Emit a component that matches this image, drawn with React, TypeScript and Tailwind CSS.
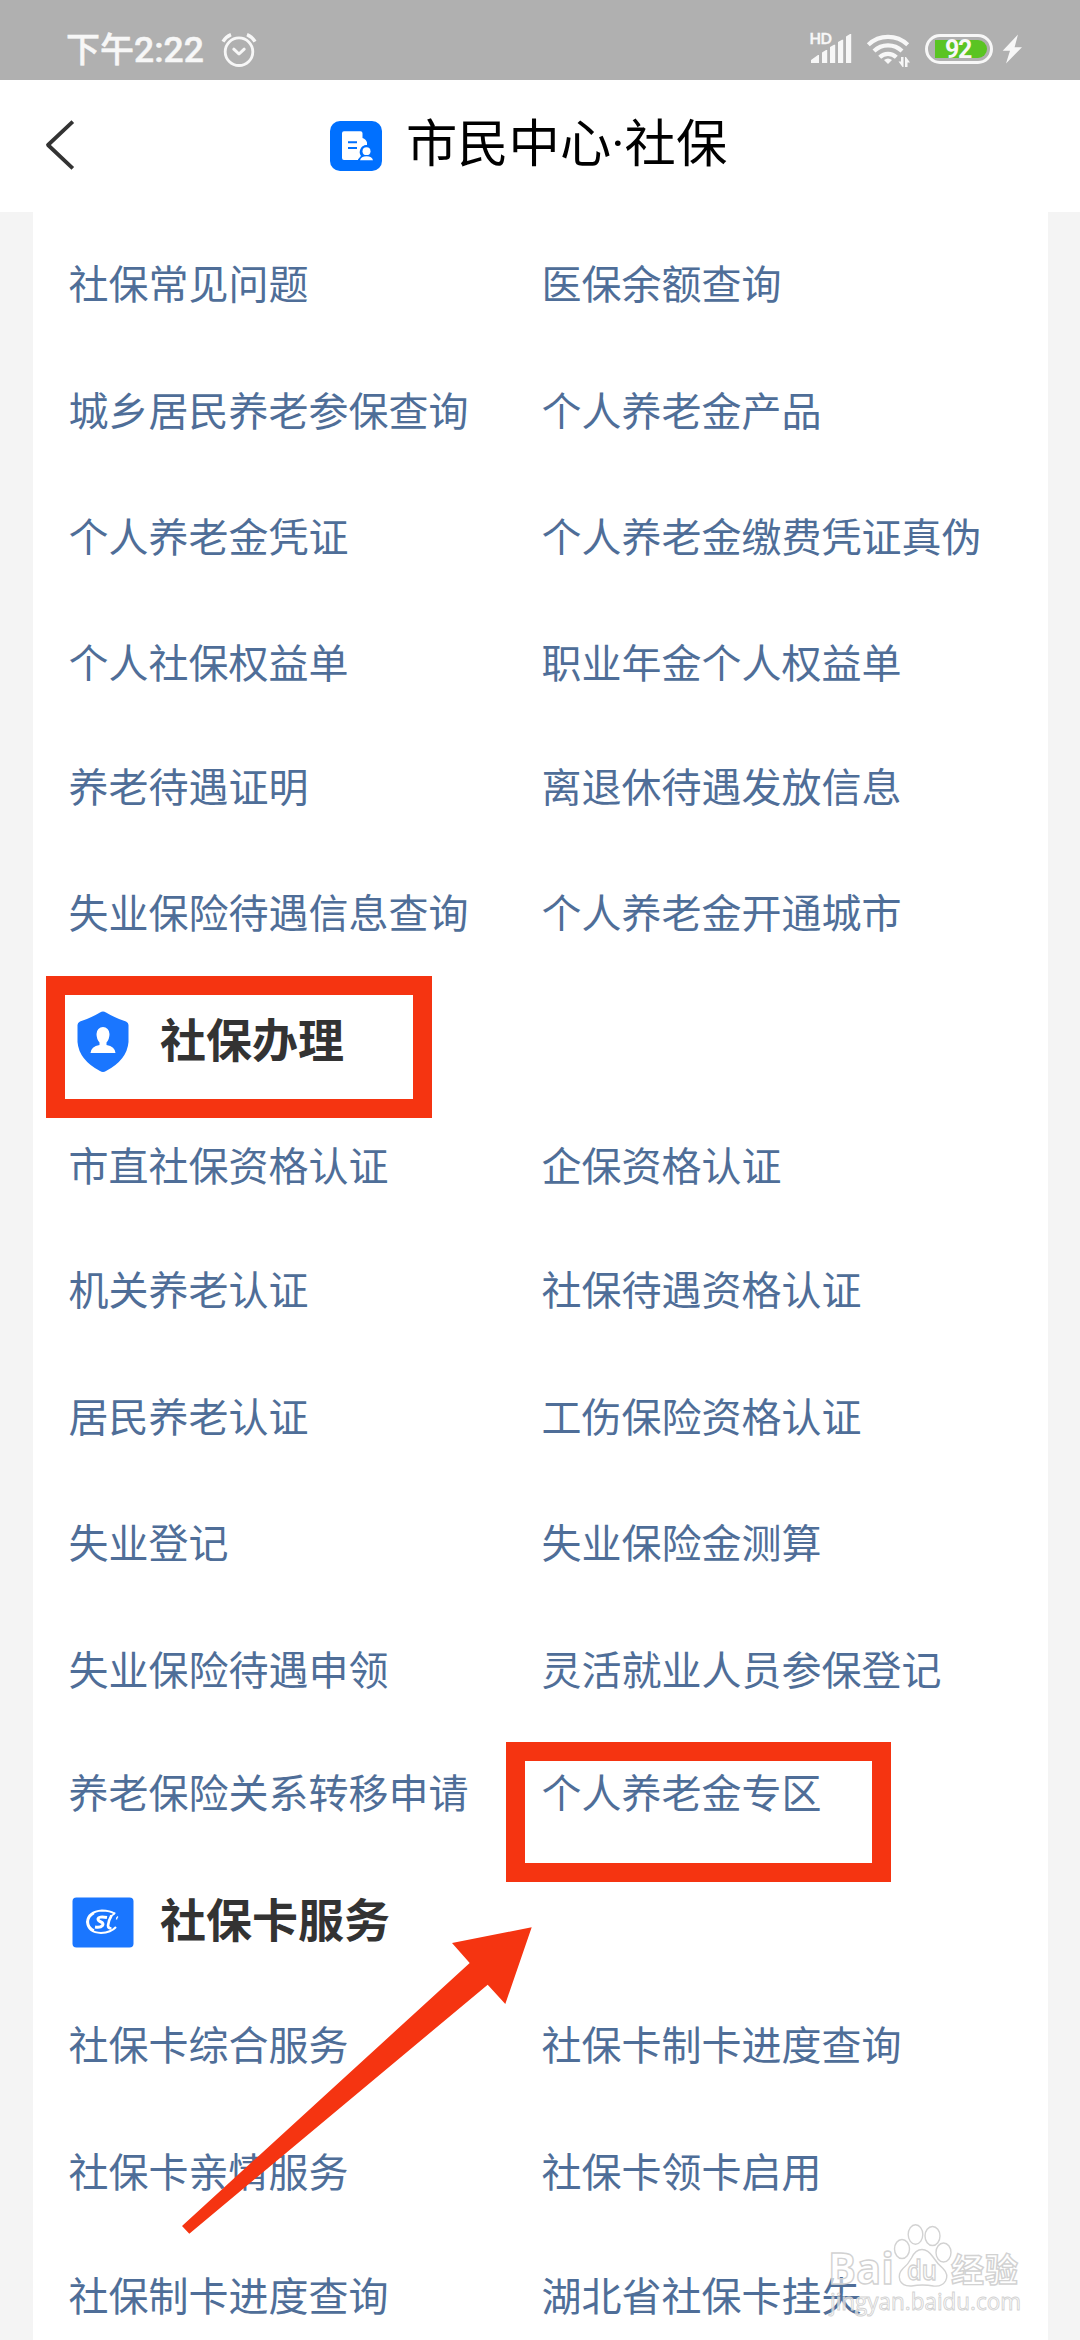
type Row = { height: string; left: string; right: string };

const queryRows: Row[] = [
  { height: 'h-[127px]', left: '社保常见问题', right: '医保余额查询' },
  { height: 'h-[126px]', left: '城乡居民养老参保查询', right: '个人养老金产品' },
  { height: 'h-[126px]', left: '个人养老金凭证', right: '个人养老金缴费凭证真伪' },
  { height: 'h-[124px]', left: '个人社保权益单', right: '职业年金个人权益单' },
  { height: 'h-[126px]', left: '养老待遇证明', right: '离退休待遇发放信息' },
  { height: 'h-[127px]', left: '失业保险待遇信息查询', right: '个人养老金开通城市' },
];

const handleRows: Row[] = [
  { height: 'h-[124px]', left: '市直社保资格认证', right: '企保资格认证' },
  { height: 'h-[127px]', left: '机关养老认证', right: '社保待遇资格认证' },
  { height: 'h-[126px]', left: '居民养老认证', right: '工伤保险资格认证' },
  { height: 'h-[127px]', left: '失业登记', right: '失业保险金测算' },
  { height: 'h-[123px]', left: '失业保险待遇申领', right: '灵活就业人员参保登记' },
  { height: 'h-[126px]', left: '养老保险关系转移申请', right: '个人养老金专区' },
];

const cardRows: Row[] = [
  { height: 'h-[127px]', left: '社保卡综合服务', right: '社保卡制卡进度查询' },
  { height: 'h-[124px]', left: '社保卡亲情服务', right: '社保卡领卡启用' },
  { height: 'h-[104px]', left: '社保制卡进度查询', right: '湖北省社保卡挂失' },
];

function StatusBar() {
  return (
    <div className="flex h-20 shrink-0 items-start bg-[#b0b0b0] text-[#f7f7f7]">
      <div className="ml-[66px] mt-[30px] flex h-10 w-[139px] items-center whitespace-nowrap text-[34px] font-medium leading-10 [-webkit-text-stroke:0.5px_#f7f7f7]">
        下午<span className="text-[35.5px]">2:22</span>
      </div>
      <svg className="ml-[16px] mt-[32px] shrink-0" width="36" height="36" viewBox="0 0 36 36" fill="none" stroke="currentColor">
        <circle cx="18" cy="19.7" r="13.8" strokeWidth="2.8" />
        <path d="M12.8 17.200L18 22l5.200-4.800" strokeWidth="3" strokeLinecap="round" strokeLinejoin="round" />
        <path d="M2 9.600Q5 4.600 10 2.600M34 9.600Q31 4.600 26 2.600" strokeWidth="3.400" />
      </svg>
      <div className="flex-1" />
      <svg className="mt-[30px] shrink-0" width="44" height="36" viewBox="809 30 44 36" fill="currentColor">
        <text x="809.5" y="44" fontSize="15" fontWeight="700" fontFamily="Lato, sans-serif" textLength="22.500" stroke="currentColor" strokeWidth="0.300">HD</text>
        <path d="M811 63v-3l7-5h1v8zM822 63V52.500l4-2.500h1.200v13zM830 63V47l4-2.300h1.200V63zM838 63V42l4-2.300h1.200V63zM846 63V36.500l4-2.500h1.200v29z" />
      </svg>
      <svg className="ml-3 mt-[30px] shrink-0" width="46" height="40" viewBox="865 30 46 40" fill="none" stroke="currentColor">
        <path d="M868.300 44.800a28.500 28.500 0 0 1 39.400 0" strokeWidth="4.200" />
        <path d="M874 51a20 20 0 0 1 28 0" strokeWidth="4.200" />
        <path d="M879.700 57.200a12 12 0 0 1 16.600 0" strokeWidth="4.200" />
        <path d="M888 64l-4-4q4-3 8 0z" fill="currentColor" stroke="none" />
        <path d="M903.500 57v10h-1l-4-5.500h2.500V57zM905 67V57h1l4 5.500h-2.500V67z" fill="currentColor" stroke="none" />
      </svg>
      <div className="ml-[14px] mt-[34px] flex h-[30px] w-[68px] shrink-0 items-center rounded-full border-[3px] border-[#f7f7f7] pl-[7px]">
        <div className="flex h-[18px] w-[52px] items-center justify-center rounded-l-[2px] rounded-r-full bg-[#5ac423] pr-[6px] font-['Roboto'] text-[25px] font-bold leading-none tracking-tighter">
          92
        </div>
      </div>
      <svg className="ml-[9px] mr-[57px] mt-[34px] shrink-0" width="21" height="31" viewBox="0 0 21 31" fill="currentColor">
        <path d="M16 0.600L0.700 16.800H8L4 29.600L20 13.200H12.600z" />
      </svg>
    </div>
  );
}

function Header() {
  return (
    <header className="flex h-[132px] shrink-0 items-start bg-white">
      <svg className="ml-[44px] mt-[40px]" width="32" height="50" viewBox="0 0 32 50" fill="none" stroke="#333" strokeWidth="3.800">
        <path d="M28.800 1.600L4 25l24.800 23.400" strokeLinejoin="round" />
      </svg>
      <svg className="ml-[254px] mt-[41px]" width="52" height="50" viewBox="0 0 52 50">
        <rect width="52" height="50" rx="10" fill="#0070ff" />
        <path d="M14 10.300h16.500a2 2 0 0 1 2 2V17q3.600 1 4.500 4.500V24a7 7 0 0 0-6 11l-3 3.500v.5H14a2 2 0 0 1-2-2V12.300a2 2 0 0 1 2-2z" fill="#fff" />
        <path d="M18 21.200h9M18 27h9" stroke="#0070ff" strokeWidth="2" />
        <circle cx="36.500" cy="30.300" r="6" fill="#0070ff" />
        <circle cx="36.500" cy="30.300" r="4" fill="#fff" />
        <path d="M28 40.500q1-6.500 8.500-6.500t8 6z" fill="#0070ff" />
        <path d="M30 39.300q1-4 6.500-4t6.500 4z" fill="#fff" />
      </svg>
      <h1 className="ml-[24px] mt-[33px] whitespace-nowrap font-['Roboto','Noto_Sans_CJK_SC',sans-serif] text-[51.3px] font-normal leading-[64px] text-black">
        市民中心·社保
      </h1>
    </header>
  );
}

function ShieldIcon() {
  return (
    <svg width="52" height="62" viewBox="0 0 52 62">
      <path d="M26 0.500q1.500 0 3 1Q38 7 49 10.500q2.500 1 2.500 3.500v17Q50 49 29 60q-3 2-6 0Q2 49 .5 31V14q0-2.500 2.500-3.500Q14 7 23 1.500q1.500-1 3-1z" fill="#1a76ff" />
      <path d="M26 16a6.500 7 0 0 1 6.500 7q0 5-3 8.500v2.500q8.500 1.500 9 8h-25q.5-6.500 9-8v-2.500q-3-3.500-3-8.500a6.500 7 0 0 1 6.500-7z" fill="#fff" />
    </svg>
  );
}

function CardIcon() {
  return (
    <svg className="mt-[2px]" width="62" height="51" viewBox="0 0 62 51">
      <rect x="0.500" y="0.500" width="61" height="50" rx="4" fill="#1a76ff" />
      <g fill="none" stroke="#fff">
        <path d="M43 17Q38 13.500 30 13.500q-14 1-15 11.500Q16 35.500 29 36q10-.5 15-6" strokeWidth="2" />
        <path d="M22 16q-6 3.500-6 9t6 8.500" strokeWidth="2.200" />
        <path d="M35 20.500q-8.500-1.500-9 1.500 0 1.800 3 3t1.500 3.500q-2 2.500-7.500 1.500" strokeWidth="3" />
        <path d="M39.500 18.500q-3 5-3.500 10 0 3 3.500 3" strokeWidth="2.600" />
        <path d="M38 19.500q4-1.500 5-4M46 19.500q-1.500 1-1.500 3" strokeWidth="1.400" />
      </g>
    </svg>
  );
}

function LinkRows({ rows }: { rows: Row[] }) {
  return (
    <>
      {rows.map((row) => (
        <div key={row.left} className={`${row.height} flex shrink-0 whitespace-nowrap pl-[35.5px] text-[40px] leading-[126px] text-[#4f6e98]`}>
          <a className="w-[473px] shrink-0">{row.left}</a>
          <a>{row.right}</a>
        </div>
      ))}
    </>
  );
}

function Watermark() {
  return (
    <svg className="absolute left-[820px] top-[2215px]" width="210" height="110" viewBox="820 2215 210 110">
      <g fill="#fff" fillOpacity="0.6" stroke="#d2d2d2" strokeWidth="1.4" fontFamily="Open Sans, sans-serif">
        <text x="828" y="2284" fontSize="43" fontWeight="700" textLength="66" lengthAdjust="spacingAndGlyphs">Bai</text>
        <ellipse cx="902" cy="2249" rx="7.500" ry="9.500" />
        <ellipse cx="915.500" cy="2234.500" rx="7.300" ry="9.800" />
        <ellipse cx="932.500" cy="2236" rx="7.500" ry="9.500" />
        <ellipse cx="943.500" cy="2252.500" rx="7.500" ry="9.500" />
        <path d="M922 2249.500q6 0 11 7.500t10 11.500q6 6 2.500 12.500-3.500 6-12 5-11-2-22 0-9 .5-11.500-5.500-2.500-6.500 3-12 5-4 8.500-10.500 4-8.500 10.500-8.500z" />
        <text x="907" y="2279.500" fontSize="27" fontWeight="600" textLength="30" lengthAdjust="spacingAndGlyphs">du</text>
        <text x="951" y="2282" fontSize="33" fontWeight="700" fontFamily="Noto Sans CJK SC, sans-serif" textLength="67">经验</text>
        <text x="830" y="2310" fontSize="23" fontWeight="500" textLength="191" lengthAdjust="spacingAndGlyphs" strokeWidth="0.900">jingyan.baidu.com</text>
      </g>
    </svg>
  );
}

export default function App() {
  return (
    <div className="relative flex h-[2340px] w-[1080px] flex-col overflow-hidden bg-[#f4f4f4] font-['Roboto','Noto_Sans_CJK_SC',sans-serif]">
      <StatusBar />
      <Header />

      <main className="ml-[33px] flex w-[1015px] flex-1 flex-col bg-white pt-[11px]">
        <LinkRows rows={queryRows} />
        <div className="flex h-[126px] shrink-0 items-center pl-11">
          <ShieldIcon />
          <h2 className="-mt-[2px] ml-[31px] whitespace-nowrap text-[46px] font-bold leading-none text-[#333]">社保办理</h2>
        </div>
        <LinkRows rows={handleRows} />
        <div className="flex h-[126px] shrink-0 items-center pl-[39px]">
          <CardIcon />
          <h2 className="ml-[26px] whitespace-nowrap text-[46px] font-bold leading-none text-[#333]">社保卡服务</h2>
        </div>
        <LinkRows rows={cardRows} />
      </main>

      {/* red markers drawn over the list */}
      <div className="absolute left-[46px] top-[976px] h-[142px] w-[386px] border-[19px] border-[#f53411]" />
      <div className="absolute left-[506px] top-[1742px] h-[140px] w-[385px] border-[19px] border-[#f53411]" />
      <svg className="absolute left-[180px] top-[1920px]" width="360" height="320" viewBox="180 1920 360 320">
        <path d="M531.700 1927.300L452 1943l17.700 20L182 2226l7.300 7.700L487.700 1984.700l17.600 19.300z" fill="#f53411" />
      </svg>
      <Watermark />
    </div>
  );
}
